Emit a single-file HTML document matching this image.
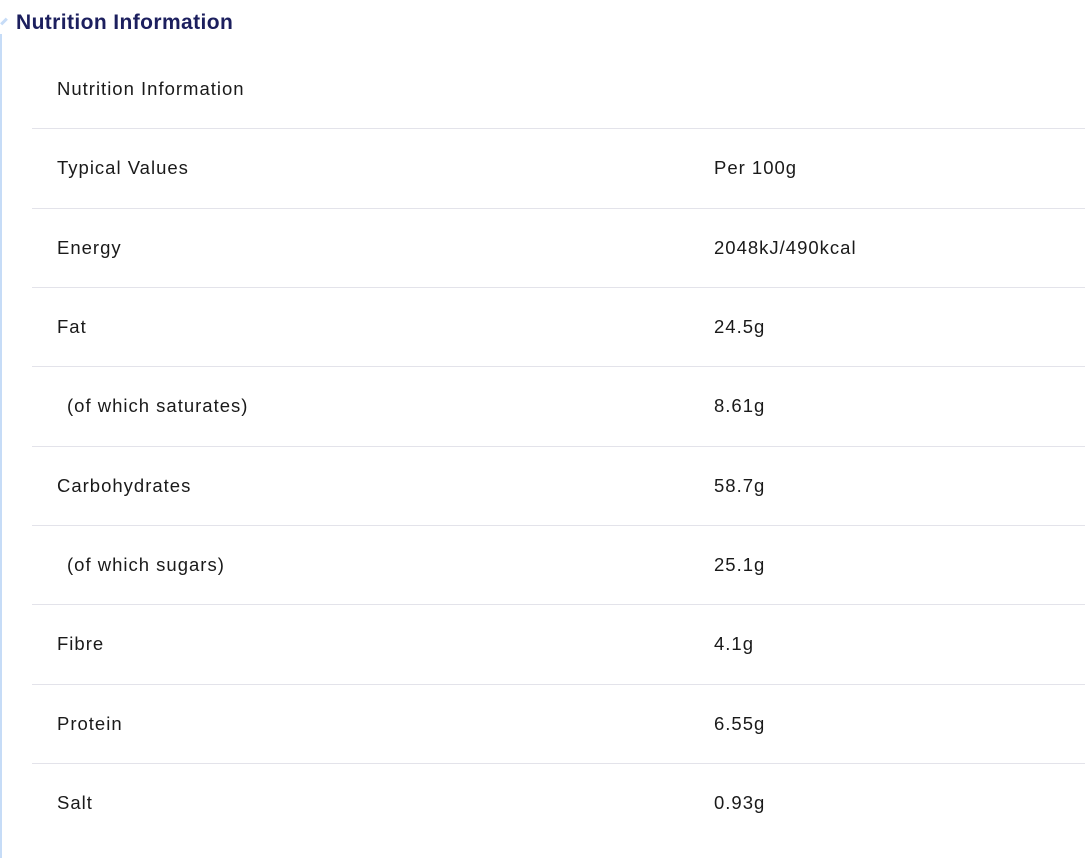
<html><head><style>
body{margin:0;background:#fff;width:1085px;height:858px;overflow:hidden;position:relative;font-family:"Liberation Sans",sans-serif;}
.h{position:absolute;left:16px;top:11px;font-size:21px;font-weight:bold;color:#1c1f5e;letter-spacing:0.4px}
.bar{position:absolute;left:0;top:34px;width:2px;height:824px;background:#c6dcf7}
.tick{position:absolute;left:0;top:20px;width:8px;height:3px;background:#c6dcf7;transform:rotate(-45deg)}
.t{position:absolute;font-size:18.5px;color:#1a1a1a;line-height:20px;letter-spacing:1px}
.l{position:absolute;left:32px;width:1053px;height:1px;background:#e3e3ea}
</style></head><body>
<div class="tick"></div><div class="bar"></div>
<div class="h">Nutrition Information</div>
<div class="t" style="left:57px;top:79px">Nutrition Information</div>
<div class="l" style="top:128px"></div>
<div class="t" style="left:57px;top:158px">Typical Values</div><div class="t" style="left:714px;top:158px">Per 100g</div>
<div class="l" style="top:208px"></div>
<div class="t" style="left:57px;top:238px">Energy</div><div class="t" style="left:714px;top:238px">2048kJ/490kcal</div>
<div class="l" style="top:287px"></div>
<div class="t" style="left:57px;top:317px">Fat</div><div class="t" style="left:714px;top:317px">24.5g</div>
<div class="l" style="top:366px"></div>
<div class="t" style="left:67px;top:396px">(of which saturates)</div><div class="t" style="left:714px;top:396px">8.61g</div>
<div class="l" style="top:446px"></div>
<div class="t" style="left:57px;top:476px">Carbohydrates</div><div class="t" style="left:714px;top:476px">58.7g</div>
<div class="l" style="top:525px"></div>
<div class="t" style="left:67px;top:555px">(of which sugars)</div><div class="t" style="left:714px;top:555px">25.1g</div>
<div class="l" style="top:604px"></div>
<div class="t" style="left:57px;top:634px">Fibre</div><div class="t" style="left:714px;top:634px">4.1g</div>
<div class="l" style="top:684px"></div>
<div class="t" style="left:57px;top:714px">Protein</div><div class="t" style="left:714px;top:714px">6.55g</div>
<div class="l" style="top:763px"></div>
<div class="t" style="left:57px;top:793px">Salt</div><div class="t" style="left:714px;top:793px">0.93g</div>
</body></html>
